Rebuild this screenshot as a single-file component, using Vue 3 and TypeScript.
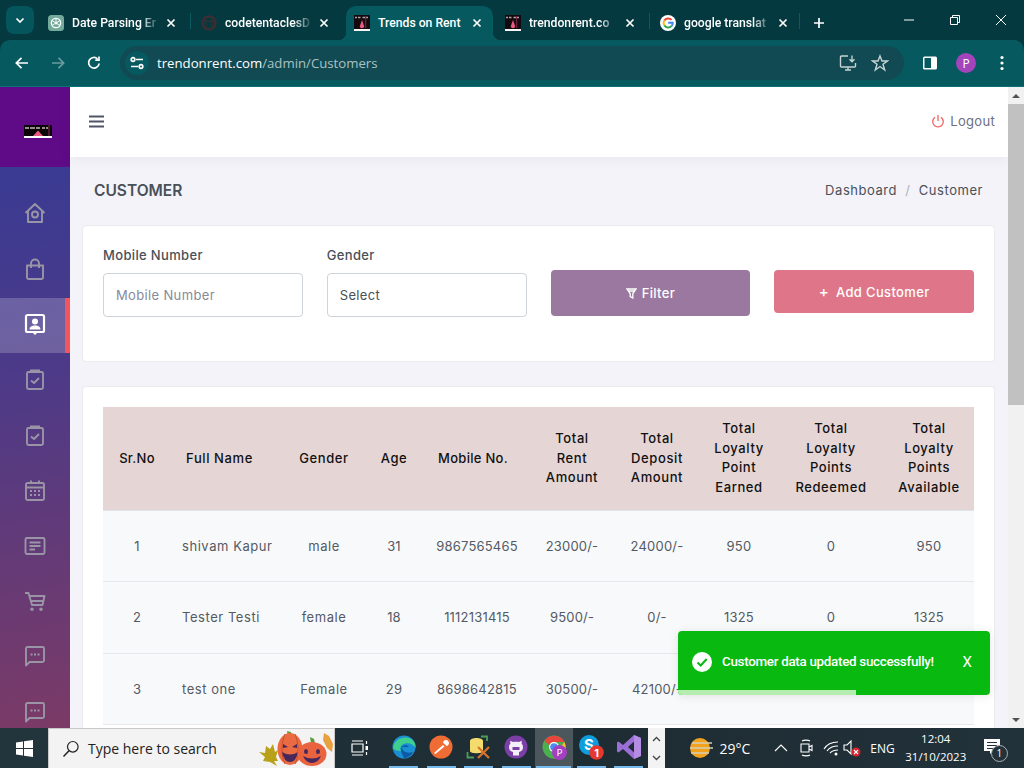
<script setup lang="ts">
interface Tab {
  title: string
  icon: 'gpt' | 'github' | 'rent' | 'google'
  active?: boolean
}

interface NavItem {
  d: string
  solid?: string
  active?: boolean
}

const tabs: Tab[] = [
  { title: 'Date Parsing Er', icon: 'gpt' },
  { title: 'codetentaclesD', icon: 'github' },
  { title: 'Trends on Rent', icon: 'rent', active: true },
  { title: 'trendonrent.co', icon: 'rent' },
  { title: 'google translat', icon: 'google' },
]

const clipboard = 'M7 5H5.5A1.5 1.5 0 0 0 4 6.500V20.500A1.500 1.500 0 0 0 5.500 22H18.500A1.500 1.500 0 0 0 20 20.500V6.500A1.500 1.500 0 0 0 18.500 5H17M8 13.500L11 16L16 11'
const clipTop = 'M7 2.500H17V6H7Z'
const chat = 'M3 4.500A1.500 1.500 0 0 1 4.500 3H19.500A1.500 1.500 0 0 1 21 4.500V16.500A1.500 1.500 0 0 1 19.500 18H6.500L3 21.500Z'
const dots = 'M7.500 9.500h2v2h-2zM11 9.500h2v2h-2zM14.500 9.500h2v2h-2z'

const navItems: NavItem[] = [
  { d: 'M2.500 12L12 3L21.500 12M5 10V21H19V10M15 13.500A3 3 0 1 1 9 13.500A3 3 0 1 1 15 13.500' },
  { d: 'M4 8.500H20V20.500A1.500 1.500 0 0 1 18.500 22H5.500A1.500 1.500 0 0 1 4 20.500ZM8 11V6.500A4 4 0 0 1 16 6.500V11' },
  {
    d: 'M4.500 3H19.500A1.500 1.500 0 0 1 21 4.500V18.500A1.500 1.500 0 0 1 19.500 20H4.500A1.500 1.500 0 0 1 3 18.500V4.500A1.500 1.500 0 0 1 4.500 3Z',
    solid: 'M12 6.500A3 3 0 1 1 12 12.500A3 3 0 1 1 12 6.500ZM6.500 17.500C6.500 14.500 9 13.500 12 13.500C15 13.500 17.500 14.500 17.500 17.500ZM9.500 20.500H14.500L12 23Z',
    active: true,
  },
  { d: clipboard, solid: clipTop },
  { d: clipboard, solid: clipTop },
  {
    d: 'M4.500 5H19.500A1.500 1.500 0 0 1 21 6.500V20.500A1.500 1.500 0 0 1 19.500 22H4.500A1.500 1.500 0 0 1 3 20.500V6.500A1.500 1.500 0 0 1 4.500 5ZM3 9.500H21M8 2.500V6M16 2.500V6',
    solid: 'M7 12h2v2H7zM11 12h2v2h-2zM15 12h2v2h-2zM7 16h2v2H7zM11 16h2v2h-2zM15 16h2v2h-2z',
  },
  { d: 'M4 4H20A1.500 1.500 0 0 1 21.500 5.500V18.500A1.500 1.500 0 0 1 20 20H4A1.500 1.500 0 0 1 2.500 18.500V5.500A1.500 1.500 0 0 1 4 4ZM6.500 8.500H17.500M6.500 12H17.500M6.500 15.500H12' },
  {
    d: 'M2 4H5.500L9 16H19.500L21.500 7H6.500M7.500 12H20',
    solid: 'M9 18.500A1.800 1.800 0 1 1 9 22.100A1.800 1.800 0 1 1 9 18.500ZM18 18.500A1.800 1.800 0 1 1 18 22.100A1.800 1.800 0 1 1 18 18.500Z',
  },
  { d: chat, solid: dots },
  { d: chat, solid: dots },
]

const columns: string[][] = [
  ['Sr.No'],
  ['Full Name'],
  ['Gender'],
  ['Age'],
  ['Mobile No.'],
  ['Total', 'Rent', 'Amount'],
  ['Total', 'Deposit', 'Amount'],
  ['Total', 'Loyalty', 'Point', 'Earned'],
  ['Total', 'Loyalty', 'Points', 'Redeemed'],
  ['Total', 'Loyalty', 'Points', 'Available'],
]

const rows: string[][] = [
  ['1', 'shivam Kapur', 'male', '31', '9867565465', '23000/-', '24000/-', '950', '0', '950'],
  ['2', 'Tester Testi', 'female', '18', '1112131415', '9500/-', '0/-', '1325', '0', '1325'],
  ['3', 'test one', 'Female', '29', '8698642815', '30500/-', '42100/-', '', '', ''],
]

const taskApps = ['edge', 'postman', 'db', 'github', 'chrome', 'skype', 'vs']
</script>

<template>
  <div class="screen">
    <header class="browser">
      <div class="tabstrip">
        <button class="tab-search">
          <svg width="12" height="12" viewBox="0 0 12 12"><path d="M2.500 4.500L6 8L9.500 4.500" class="glyph" /></svg>
        </button>
        <div
          v-for="(tab, i) in tabs"
          :key="i"
          class="tab"
          :class="[`tab-${i}`, { 'tab-active': tab.active }]"
        >
          <svg v-if="tab.icon === 'gpt'" class="favicon" viewBox="0 0 16 16">
            <rect width="16" height="16" rx="3.500" fill="#74aa9c" />
            <circle cx="8" cy="8" r="4.700" fill="none" stroke="#fff" stroke-width="1.200" />
            <path d="M8 3.300V9.500M4 5.700L9.300 8.800M4 10.300L9.300 7.200M12 5.700L8 8M12 10.300L8 8" fill="none" stroke="#fff" stroke-width=".9" />
          </svg>
          <svg v-else-if="tab.icon === 'github'" class="favicon" viewBox="0 0 16 16">
            <circle cx="8" cy="8" r="6.500" fill="none" stroke="#3b2f33" stroke-width="2.400" />
            <path d="M5 13.500V9L3.800 5.500L6.500 6.300H9.500L12.200 5.500L11 9V13.500" fill="none" stroke="#3b2f33" stroke-width="1.200" />
          </svg>
          <svg v-else-if="tab.icon === 'rent'" class="favicon" viewBox="0 0 16 16">
            <rect width="16" height="16" fill="#14090f" />
            <path d="M1 2.500H3M4 2.500H6.500M8.500 2.500H11M12 2.500H14" stroke="#b0a2a5" stroke-width="1.600" />
            <path d="M11.700 1V13" stroke="#7e2b4b" stroke-width="1" />
            <path d="M8 5L10.300 11.500A2.400 2.400 0 0 1 5.700 11.500Z" fill="#ec5a83" />
            <rect y="14" width="16" height="2" fill="#f7f4f4" />
          </svg>
          <svg v-else class="favicon" viewBox="0 0 16 16">
            <circle cx="8" cy="8" r="8" fill="#fff" />
            <path d="M11.600 4.900A4.700 4.700 0 0 0 4.300 5.600" fill="none" stroke="#ea4335" stroke-width="1.900" />
            <path d="M4.300 5.600A4.700 4.700 0 0 0 4.300 10.400" fill="none" stroke="#fbbc05" stroke-width="1.900" />
            <path d="M4.300 10.400A4.700 4.700 0 0 0 11.700 10.900" fill="none" stroke="#34a853" stroke-width="1.900" />
            <path d="M11.700 10.900A4.700 4.700 0 0 0 12.700 7.800H8.200" fill="none" stroke="#4285f4" stroke-width="1.900" />
          </svg>
          <span class="tab-title">{{ tab.title }}</span>
          <svg class="tab-close" width="10" height="10" viewBox="0 0 10 10"><path d="M1.500 1.500L8.500 8.500M8.500 1.500L1.500 8.500" class="glyph" /></svg>
        </div>
        <svg class="tab-new" width="14" height="14" viewBox="0 0 14 14"><path d="M7 2V12M2 7H12" class="glyph" /></svg>
        <div class="window-controls">
          <svg width="12" height="12" viewBox="0 0 12 12"><path d="M1 6H11" class="thin" /></svg>
          <svg width="12" height="12" viewBox="0 0 12 12"><path d="M1.500 3.500H8.500V10.500H1.500ZM3.500 3.500V1.500H10.500V8.500H8.500" class="thin" /></svg>
          <svg width="12" height="12" viewBox="0 0 12 12"><path d="M1 1L11 11M11 1L1 11" class="thin" /></svg>
        </div>
      </div>
      <div class="toolbar">
        <svg width="16" height="16" viewBox="0 0 16 16"><path d="M14 8H2.500M7.500 2.800L2.300 8L7.500 13.200" class="glyph" /></svg>
        <svg class="nav-off" width="16" height="16" viewBox="0 0 16 16"><path d="M2 8H13.500M8.500 2.800L13.700 8L8.500 13.200" class="glyph" /></svg>
        <svg width="16" height="16" viewBox="0 0 16 16"><path d="M13.200 8.500A5.300 5.300 0 1 1 11.500 3.800M13 1.500V5.200H9.300" class="glyph" /></svg>
        <div class="omnibox">
          <span class="site-info">
            <svg width="14" height="14" viewBox="0 0 14 14">
              <path d="M6 3.500H13M1 10.500H8" class="glyph" />
              <circle cx="3" cy="3.500" r="1.800" class="glyph" />
              <circle cx="11" cy="10.500" r="1.800" class="glyph" />
            </svg>
          </span>
          <span class="url">trendonrent.com<span class="url-dim">/admin/Customers</span></span>
          <svg class="omni-icon" width="18" height="18" viewBox="0 0 18 18">
            <path d="M9 2H2.500A1 1 0 0 0 1.500 3V12A1 1 0 0 0 2.500 13H15.500A1 1 0 0 0 16.500 12V9M6 16H12M9 13V16M13 1.500V7.500M10.500 5.200L13 7.700L15.500 5.200" class="omni-line" />
          </svg>
          <svg class="omni-icon star" width="18" height="18" viewBox="0 0 18 18">
            <path d="M9 2L11 7H16.500L12 10.300L13.700 16L9 12.500L4.300 16L6 10.300L1.500 7H7Z" class="omni-line" />
          </svg>
        </div>
        <svg class="side-panel" width="16" height="16" viewBox="0 0 16 16">
          <rect x="1" y="1.500" width="14" height="13" rx="1.500" fill="#fff" />
          <rect x="2.500" y="3" width="6.500" height="10" fill="#04595f" />
        </svg>
        <span class="avatar">P</span>
        <svg class="kebab" width="4" height="16" viewBox="0 0 4 16">
          <circle cx="2" cy="2.500" r="1.600" fill="#fff" />
          <circle cx="2" cy="8" r="1.600" fill="#fff" />
          <circle cx="2" cy="13.500" r="1.600" fill="#fff" />
        </svg>
      </div>
    </header>

    <div class="viewport">
      <aside class="sidebar">
        <div class="brand">
          <svg class="brand-logo" width="28" height="13" viewBox="0 0 28 13">
            <rect width="28" height="11" fill="#0b0709" />
            <path d="M1 3H5M6 3H11M12 3H16M18 3H21M22 3H24" stroke="#c6bbbb" stroke-width="1.500" />
            <path d="M14 5.500L19 11H9Z" fill="#ea5a80" />
            <rect x="24.500" y="0" width="1" height="11" fill="#8a2c55" />
            <rect y="11" width="28" height="2" fill="#fff" />
          </svg>
        </div>
        <nav class="nav">
          <div v-for="(item, i) in navItems" :key="i" class="nav-item" :class="{ 'nav-active': item.active }">
            <svg width="24" height="24" viewBox="0 0 24 24">
              <path :d="item.d" class="nav-line" />
              <path v-if="item.solid" :d="item.solid" class="nav-solid" />
            </svg>
          </div>
        </nav>
      </aside>

      <main class="page">
        <div class="topbar">
          <svg width="16" height="13" viewBox="0 0 16 13"><path d="M0 1.500H15M0 6.500H15M0 11.500H15" class="burger" /></svg>
          <span class="logout">
            <svg width="14" height="14" viewBox="0 0 14 14"><path d="M4 3.200A5.300 5.300 0 1 0 10 3.200M7 1V7" class="power" /></svg>
            Logout
          </span>
        </div>

        <div class="title-row">
          <h1>CUSTOMER</h1>
          <div class="crumbs">Dashboard <span class="crumb-sep">/</span> Customer</div>
        </div>

        <section class="card filters">
          <div class="field">
            <label>Mobile Number</label>
            <input type="text" placeholder="Mobile Number" />
          </div>
          <div class="field">
            <label>Gender</label>
            <div class="select">Select</div>
          </div>
          <button class="btn btn-filter">
            <svg width="11" height="11" viewBox="0 0 11 11"><path d="M1 1H10L6.800 5.500V10L4.200 8.500V5.500ZM3 3H8" class="btn-icon" /></svg>
            Filter
          </button>
          <button class="btn btn-add"><span class="plus">+</span> Add Customer</button>
        </section>

        <section class="card table-card">
          <table>
            <thead>
              <tr>
                <th v-for="(col, i) in columns" :key="i">
                  <div v-for="line in col" :key="line">{{ line }}</div>
                </th>
              </tr>
            </thead>
            <tbody>
              <tr v-for="row in rows" :key="row[0]">
                <td v-for="(cell, i) in row" :key="i">{{ cell }}</td>
              </tr>
            </tbody>
          </table>
        </section>
      </main>

      <div class="scrollbar">
        <span class="arrow arrow-up"></span>
        <div class="track"><div class="thumb"></div></div>
        <span class="arrow arrow-down"></span>
      </div>

      <div class="toast">
        <svg width="20" height="20" viewBox="0 0 20 20">
          <circle cx="10" cy="10" r="10" fill="#fff" />
          <path d="M5.500 10.500L8.700 13.500L14.700 7" fill="none" stroke="#08b90f" stroke-width="2" />
        </svg>
        <span class="toast-text">Customer data updated successfully!</span>
        <span class="toast-close">X</span>
        <div class="toast-progress"></div>
      </div>
    </div>

    <footer class="taskbar">
      <div class="start">
        <svg width="17" height="17" viewBox="0 0 17 17">
          <path d="M0 2.400L7 1.400V8H0ZM8 1.300L17 0V8H8ZM0 9H7V15.600L0 14.600ZM8 9H17V17L8 15.700Z" fill="#fff" />
        </svg>
      </div>
      <div class="search">
        <svg width="18" height="18" viewBox="0 0 18 18">
          <circle cx="10.800" cy="6.800" r="5.300" fill="none" stroke="#222" stroke-width="1.200" />
          <path d="M7 10.800L1.500 16.500" stroke="#222" stroke-width="1.500" />
        </svg>
        <span class="search-text">Type here to search</span>
        <svg class="pumpkins" width="76" height="38" viewBox="0 0 76 38">
          <path d="M1 22L7 23L8 16L12 19L15 14L17 22L20 20L18 27L20 31L16 31L19 36L12 32L5 31L7 27Z" fill="#b9a019" />
          <path d="M30 7L29 1L33 2L34 7Z" fill="#5d9a3e" />
          <ellipse cx="32" cy="19" rx="12.500" ry="16" fill="#ea6a42" />
          <path d="M27 4C23 14 23 26 27 34M37 4C41 14 41 26 37 34" fill="none" stroke="#c9502f" stroke-width="1" />
          <path d="M25 14L30 17L25 18ZM39 14L34 17L39 18Z" fill="#46285c" />
          <path d="M24 22Q32 27 40 22Q38 32 32 32Q26 32 24 22Z" fill="#46285c" />
          <path d="M53 13L52 7L56 9L57 13Z" fill="#5d9a3e" />
          <ellipse cx="54" cy="24" rx="14.500" ry="12" fill="#e9633f" />
          <path d="M48 19A2 2.500 0 1 1 48 24A2 2.500 0 1 1 48 19ZM60 19A2 2.500 0 1 1 60 24A2 2.500 0 1 1 60 19Z" fill="#46285c" />
          <path d="M45 26Q54 31 63 26Q60 33 54 33Q48 33 45 26Z" fill="#46285c" />
          <path d="M66 3L71 6L75 14L74 22L69 18L65 10Z" fill="#e9a03f" />
        </svg>
      </div>
      <div class="task-view">
        <svg width="18" height="16" viewBox="0 0 18 16">
          <path d="M1 4H12V12H1ZM1 1H12M1 15H12M15.500 1V4M15.500 12V15" fill="none" stroke="#fff" stroke-width="1.200" />
          <rect x="14.500" y="6" width="2.500" height="4" fill="#fff" />
        </svg>
      </div>
      <div v-for="app in taskApps" :key="app" class="task-app" :class="{ 'app-current': app === 'chrome' }">
        <svg width="26" height="26" viewBox="0 0 26 26">
          <template v-if="app === 'edge'">
            <circle cx="13" cy="13" r="11.500" fill="#1b8fd3" />
            <path d="M2 14C3 6 11 2 18 4C23 6 25 10 24.500 14C22 9 15 8 11 11C9 13 9 15 10 17C6 17 3 16 2 14Z" fill="#3ecf8e" />
            <path d="M10 15C10 11 16 10 18 13H11C11 17 15 20 22 18C20 22 16 24 13 24C11 20 10 18 10 15Z" fill="#0c59a4" />
          </template>
          <template v-else-if="app === 'postman'">
            <circle cx="13" cy="13" r="11.500" fill="#ef6c35" />
            <path d="M6 19L15 11L16.500 12.500L7.500 20ZM15 8.500A3 3 0 1 1 18.500 12Z" fill="#fff" />
          </template>
          <template v-else-if="app === 'db'">
            <path d="M4 7C4 3 17 3 17 7V17C17 20 4 20 4 17Z" fill="#f3dc6d" />
            <path d="M15 2.500H21V7M1.500 18V23.500H8" fill="none" stroke="#4f9c5a" stroke-width="1.800" />
            <path d="M12 13L23 24M23 13L12 24" stroke="#d9742c" stroke-width="2.200" />
          </template>
          <template v-else-if="app === 'github'">
            <circle cx="13" cy="13" r="11.500" fill="#7b3fa6" />
            <path d="M10 21.500V18C7 17.500 6 15.500 6 13C6 11.500 6.500 10.500 7.300 9.700L7.300 6.800L10 8C12 7.500 14 7.500 16 8L18.700 6.800L18.700 9.700C19.500 10.500 20 11.500 20 13C20 15.500 19 17.500 16 18V21.500" fill="#f3eef7" />
            <path d="M9.500 13H16.500V16H9.500Z" fill="#7b3fa6" />
          </template>
          <template v-else-if="app === 'chrome'">
            <circle cx="13" cy="13" r="11.500" fill="#4caf50" />
            <path d="M3.500 7A11.500 11.500 0 0 1 23.500 8H13A5 5 0 0 0 8 11Z" fill="#e8453c" />
            <path d="M23.500 8A11.500 11.500 0 0 1 13 24.500L17 16Z" fill="#fbc02d" />
            <circle cx="13" cy="13" r="5" fill="#fff" />
            <circle cx="13" cy="13" r="3.800" fill="#4a8af4" />
            <circle cx="18.500" cy="18.500" r="7.500" fill="#a33fc0" />
            <text x="18.500" y="21.500" text-anchor="middle" class="badge-p">P</text>
          </template>
          <template v-else-if="app === 'skype'">
            <circle cx="11" cy="11" r="10" fill="#0e9ee0" />
            <text x="11" y="16" text-anchor="middle" class="skype-s">S</text>
            <circle cx="18.500" cy="18.500" r="7.300" fill="#e5392f" />
            <text x="18.500" y="22.500" text-anchor="middle" class="badge-one">1</text>
          </template>
          <template v-else>
            <path d="M18 1L25 4V22L18 25L7 15L2.500 18.500L1 17.500V8.500L2.500 7.500L7 11ZM18 7.500L12 13L18 18.500Z" fill="#9b6fd6" />
            <path d="M18 1L25 4V22L18 25Z" fill="#b48ce6" />
          </template>
        </svg>
      </div>
      <div class="overflow-arrows">
        <svg width="9" height="6" viewBox="0 0 9 6"><path d="M1 5L4.500 1.500L8 5" class="chev" /></svg>
        <svg width="9" height="6" viewBox="0 0 9 6"><path d="M1 1L4.500 4.500L8 1" class="chev" /></svg>
      </div>
      <div class="tray">
        <svg class="weather" width="24" height="22" viewBox="0 0 24 22">
          <circle cx="11" cy="11" r="10" fill="#f2a21c" />
          <path d="M3 6H23M1 11H24M2 16H20" stroke="#d8d0b8" stroke-width="1.300" />
        </svg>
        <span class="temp">29°C</span>
        <svg class="tray-chev" width="14" height="8" viewBox="0 0 14 8"><path d="M1 7L7 1L13 7" class="tray-line" /></svg>
        <svg class="tray-meet" width="14" height="20" viewBox="0 0 14 20">
          <path d="M2 6H10V14H2ZM10 9L13 7.500V12.500L10 11M3 3C5 1.800 9 1.800 11 3M3 17C5 18.200 9 18.200 11 17" class="tray-line" />
        </svg>
        <svg class="tray-wifi" width="16" height="16" viewBox="0 0 16 16">
          <path d="M1 9C4 4 9 2 15 2M4 11C6 8 10 6 15 6M7 13C9 11 11 10 15 10" class="tray-line" />
          <circle cx="13" cy="14" r="1.500" fill="#fff" />
        </svg>
        <svg class="tray-sound" width="18" height="18" viewBox="0 0 18 18">
          <path d="M1 6H4L8 2V15L4 11H1Z" class="tray-line" />
          <circle cx="13" cy="13" r="4.500" fill="#d3232f" />
          <path d="M11 11L15 15M15 11L11 15" stroke="#fff" stroke-width="1.100" />
        </svg>
        <span class="lang">ENG</span>
        <div class="clock"><div>12:04</div><div>31/10/2023</div></div>
        <div class="notify">
          <svg width="16" height="15" viewBox="0 0 16 15">
            <path d="M0 0H16V12H9L6 15V12H0Z" fill="#fff" />
            <path d="M3 3.500H13M3 6.500H13M3 9.500H10" stroke="#24333a" stroke-width="1" />
          </svg>
          <span class="notify-count">1</span>
        </div>
      </div>
    </footer>
  </div>
</template>

<style>
html,
body {
  margin: 0;
  overflow: hidden;
}
</style>

<style scoped>
.screen {
  width: 1024px;
  height: 768px;
  display: flex;
  flex-direction: column;
  overflow: hidden;
  font-family: Inter, 'Noto Sans', sans-serif;
}
.glyph {
  fill: none;
  stroke: #fff;
  stroke-width: 1.700;
}
.thin {
  fill: none;
  stroke: #fff;
  stroke-width: 1;
}

/* browser */
.browser {
  height: 87px;
  background: #03393f;
  flex: none;
  font-family: 'Open Sans', 'Noto Sans', sans-serif;
  color: #fff;
}
.tabstrip {
  height: 40px;
  display: flex;
  align-items: flex-end;
  padding-left: 6px;
}
.tab-search {
  width: 28px;
  height: 28px;
  margin: 0 4px 6px 0;
  border: none;
  border-radius: 8px;
  background: #05555c;
  display: flex;
  align-items: center;
  justify-content: center;
  padding: 0;
}
.tab {
  position: relative;
  height: 34px;
  box-sizing: border-box;
  display: flex;
  align-items: center;
  padding: 0 15px 0 10px;
  font-family: Roboto, sans-serif;
  font-size: 12.200px;
  font-weight: 500;
}
.tab-0 { width: 153px; }
.tab-1 { width: 153px; }
.tab-2 {
  width: 147px;
  margin: 0 2px;
  padding: 0 11px 0 8px;
}
.tab-3 { width: 155px; }
.tab-4 {
  width: 150px;
  padding-right: 12px;
}
.tab-0::after,
.tab-3::after,
.tab-4::after {
  content: '';
  position: absolute;
  right: 0;
  top: 7px;
  width: 1px;
  height: 16px;
  background: #0a5a62;
}
.tab-active {
  background: #05595f;
  border-radius: 10px 10px 0 0;
}
.tab-active::before,
.tab-active::after {
  content: '';
  position: absolute;
  bottom: 0;
  width: 8px;
  height: 8px;
}
.tab-active::before {
  left: -8px;
  background: radial-gradient(circle at 0 0, transparent 8px, #05595f 8.500px);
}
.tab-active::after {
  right: -8px;
  background: radial-gradient(circle at 100% 0, transparent 8px, #05595f 8.500px);
}
.favicon {
  width: 16px;
  height: 16px;
  flex: none;
  margin-right: 8px;
}
.tab-title {
  flex: 1;
  overflow: hidden;
  white-space: nowrap;
  -webkit-mask-image: linear-gradient(90deg, #000 78%, transparent 100%);
  mask-image: linear-gradient(90deg, #000 78%, transparent 100%);
}
.tab-active .tab-title {
  -webkit-mask-image: none;
  mask-image: none;
}
.tab-close {
  flex: none;
  margin-left: 6px;
}
.tab-new {
  margin: 0 0 10px 12px;
}
.window-controls {
  margin-left: auto;
  height: 40px;
  display: flex;
  align-items: center;
  gap: 34px;
  padding: 0 17px 0 0;
}
.window-controls svg {
  width: 12px;
  height: 12px;
}
.toolbar {
  height: 47px;
  box-sizing: border-box;
  background: #05595f;
  border-radius: 10px 10px 0 0;
  display: flex;
  align-items: center;
  padding: 0 0 0 14px;
  border-bottom: 1px solid #0b7278;
}
.nav-off {
  margin-left: 20px;
  opacity: 0.4;
}
.nav-off + svg {
  margin-left: 20px;
}
.omnibox {
  width: 784px;
  height: 34px;
  margin-left: 18px;
  border-radius: 17px;
  background: #114a52;
  display: flex;
  align-items: center;
  padding-left: 5px;
  box-sizing: border-box;
}
.site-info {
  width: 24px;
  height: 24px;
  border-radius: 50%;
  background: #05595f;
  display: flex;
  align-items: center;
  justify-content: center;
}
.url {
  margin-left: 8px;
  font-size: 13.200px;
  flex: 1;
}
.url-dim {
  color: #a9c2c4;
}
.omni-icon {
  flex: none;
}
.omni-line {
  fill: none;
  stroke: #c7d4d5;
  stroke-width: 1.400;
}
.star {
  margin: 0 15px 0 14px;
}
.side-panel {
  margin-left: 18px;
}
.avatar {
  width: 20px;
  height: 20px;
  margin-left: 18px;
  border-radius: 50%;
  background: #a344bd;
  font-size: 12px;
  display: flex;
  align-items: center;
  justify-content: center;
}
.kebab {
  margin-left: 24px;
}

/* page */
.viewport {
  flex: 1;
  min-height: 0;
  display: flex;
  position: relative;
  overflow: hidden;
}
.sidebar {
  width: 70px;
  flex: none;
  display: flex;
  flex-direction: column;
  background: linear-gradient(170deg, #323b97 0%, #4d3a88 45%, #7b3a66 100%);
}
.brand {
  height: 80px;
  flex: none;
  background: #5f0a87;
  display: flex;
  align-items: center;
  justify-content: center;
}
.brand-logo {
  margin: 9px 0 0 6px;
}
.nav {
  padding-top: 20px;
}
.nav-item {
  height: 55.400px;
  box-sizing: border-box;
  padding: 0 1px 3px 0;
  display: flex;
  align-items: center;
  justify-content: center;
}
.nav-line {
  fill: none;
  stroke: #9a95a6;
  stroke-width: 1.900;
  stroke-linejoin: round;
}
.nav-solid {
  fill: #9a95a6;
}
.nav-active {
  background: rgba(255, 255, 255, 0.2);
  border-right: 5px solid #f5545a;
  padding-left: 5px;
}
.nav-active .nav-line {
  stroke: #fff;
  stroke-width: 2.200;
}
.nav-active .nav-solid {
  fill: #fff;
}
.page {
  flex: 1;
  min-width: 0;
  background: #f3f3f9;
  padding: 0 13px 0 12px;
}
.topbar {
  height: 70px;
  box-sizing: border-box;
  margin: 0 -13px 0 -12px;
  padding: 0 13px 2px 19px;
  background: #fff;
  box-shadow: 0 1px 12px rgba(56, 65, 74, 0.07);
  display: flex;
  align-items: center;
  justify-content: space-between;
}
.burger {
  fill: none;
  stroke: #505468;
  stroke-width: 2.200;
}
.logout {
  display: flex;
  align-items: center;
  gap: 5px;
  font-size: 13px;
  letter-spacing: 0.3px;
  color: #6b6f80;
}
.power {
  fill: none;
  stroke: #f0625f;
  stroke-width: 1.300;
}
.title-row {
  height: 68px;
  box-sizing: border-box;
  padding: 0 12px 2px;
  display: flex;
  align-items: center;
  justify-content: space-between;
}
.title-row h1 {
  margin: 0;
  font-size: 15.500px;
  font-weight: 600;
  color: #495057;
}
.crumbs {
  font-size: 13px;
  letter-spacing: 0.55px;
  color: #495057;
}
.crumb-sep {
  margin: 0 4px;
  color: #adb5bd;
}
.card {
  background: #fff;
  border: 1px solid #e9ebec;
  border-radius: 4px;
  box-sizing: border-box;
}
.filters {
  height: 137px;
  padding: 20px;
  display: grid;
  grid-template-columns: repeat(4, 1fr);
  column-gap: 24px;
  align-items: start;
}
.field {
  display: flex;
  flex-direction: column;
}
.field label {
  height: 27px;
  font-size: 13px;
  line-height: 19px;
  letter-spacing: 0.35px;
  font-weight: 500;
  color: #495057;
}
.field input,
.select {
  width: 100%;
  height: 44px;
  box-sizing: border-box;
  padding: 0 12px 1px;
  border: 1px solid #ced4da;
  border-radius: 4px;
  background: #fff;
  font: 13px Inter, sans-serif;
  letter-spacing: 0.35px;
  display: flex;
  align-items: center;
  color: #495057;
}
.field input::placeholder {
  color: #878a99;
}
.btn {
  margin-top: 24px;
  border: none;
  border-radius: 4px;
  color: #fff;
  font: 13px Inter, sans-serif;
  font-weight: 500;
  letter-spacing: 0.35px;
  display: flex;
  align-items: center;
  justify-content: center;
  gap: 5px;
  padding: 0;
}
.btn-filter {
  height: 46px;
  background: #9b789f;
}
.btn-add {
  height: 43px;
  background: #de7588;
}
.plus {
  font-size: 15px;
  margin-right: 2px;
}
.btn-icon {
  fill: none;
  stroke: #fff;
  stroke-width: 1.300;
}
.table-card {
  margin-top: 24px;
  padding: 20px;
}
table {
  width: 871px;
  table-layout: fixed;
  border-collapse: collapse;
  background: #f8f9fb;
}
th {
  height: 103px;
  box-sizing: border-box;
  padding: 0;
  background: #e5d6d5;
  font-size: 13px;
  line-height: 19.500px;
  font-weight: 500;
  color: #111;
  letter-spacing: 0.6px;
  border-bottom: 1px solid #dfe4e8;
}
th:nth-child(1),
th:nth-child(5) {
  letter-spacing: 0.3px;
}
td {
  height: 71.500px;
  box-sizing: border-box;
  padding: 0;
  text-align: center;
  font-size: 13px;
  color: #545a63;
  letter-spacing: 0.2px;
  border-bottom: 1px solid #e6e8eb;
}
td:nth-child(2),
td:nth-child(3) {
  letter-spacing: 0.55px;
}
td:nth-child(2) {
  text-align: left;
  padding-left: 11px;
}
th:nth-child(1), td:nth-child(1) { width: 68px; }
th:nth-child(2), td:nth-child(2) { width: 113px; }
th:nth-child(3), td:nth-child(3) { width: 80px; }
th:nth-child(4), td:nth-child(4) { width: 60px; }
th:nth-child(5), td:nth-child(5) { width: 106px; }
th:nth-child(6), td:nth-child(6) { width: 84px; }
th:nth-child(7), td:nth-child(7) { width: 86px; }
th:nth-child(8), td:nth-child(8) { width: 78px; }
th:nth-child(9), td:nth-child(9) { width: 106px; }
th:nth-child(10), td:nth-child(10) { width: 90px; }
th:nth-child(2) {
  padding-right: 16px;
}
th:nth-child(5) {
  padding-right: 8px;
}
.scrollbar {
  width: 16px;
  flex: none;
  display: flex;
  flex-direction: column;
  align-items: center;
  background: #f1f1f1;
}
.arrow {
  height: 17px;
  flex: none;
  display: flex;
  align-items: center;
}
.arrow::before {
  content: '';
  border-left: 4px solid transparent;
  border-right: 4px solid transparent;
}
.arrow-up::before {
  border-bottom: 4px solid #505050;
}
.arrow-down::before {
  border-top: 4px solid #505050;
}
.track {
  flex: 1;
  width: 100%;
}
.thumb {
  height: 301px;
  background: #c1c1c1;
}
.toast {
  position: absolute;
  left: 678px;
  top: 544px;
  width: 312px;
  height: 64px;
  box-sizing: border-box;
  padding: 0 18px 3px 14px;
  border-radius: 4px;
  overflow: hidden;
  background: #08b90f;
  box-shadow: 0 1px 10px rgba(0, 0, 0, 0.1);
  display: flex;
  align-items: center;
  font-family: Roboto, sans-serif;
  font-size: 13.400px;
  letter-spacing: -0.3px;
  font-weight: 500;
  color: #fff;
}
.toast-text {
  margin-left: 10px;
  flex: 1;
}
.toast-close {
  font-size: 15px;
  font-weight: 400;
  letter-spacing: 0;
}
.toast-progress {
  position: absolute;
  left: 0;
  bottom: 0;
  width: 178px;
  height: 5px;
  background: #b5ecb0;
}

/* windows taskbar */
.taskbar {
  height: 40px;
  flex: none;
  display: flex;
  align-items: center;
  background: linear-gradient(90deg, #22343c, #1e2c33 60%, #22323a);
  font-family: 'Open Sans', 'Noto Sans', sans-serif;
  color: #fff;
}
.start {
  width: 48px;
  display: flex;
  justify-content: center;
}
.search {
  width: 287px;
  height: 40px;
  box-sizing: border-box;
  background: #f3f3f3;
  border: 1px solid #c9c9c9;
  border-bottom: none;
  display: flex;
  align-items: center;
  padding-left: 13px;
  color: #222;
  font-size: 14px;
}
.search-text {
  margin-left: 8px;
}
.pumpkins {
  margin-left: auto;
}
.task-view {
  width: 50px;
  display: flex;
  justify-content: center;
}
.task-app {
  width: 37.500px;
  height: 40px;
  flex: none;
  box-sizing: border-box;
  display: flex;
  align-items: center;
  justify-content: center;
  padding: 0 0 2px;
  background: linear-gradient(#76b9ed, #76b9ed) center bottom / 29px 2px no-repeat;
}
.app-current {
  background: linear-gradient(#76b9ed, #76b9ed) center bottom / 35px 2px no-repeat,
    rgba(255, 255, 255, 0.2);
}
.badge-p {
  font: 9px Inter, sans-serif;
  fill: #fff;
}
.skype-s {
  font: 700 15px Inter, sans-serif;
  fill: #fff;
}
.badge-one {
  font: 700 11px Inter, sans-serif;
  fill: #fff;
}
.overflow-arrows {
  width: 17px;
  height: 40px;
  flex: none;
  background: #f3f3f3;
  display: flex;
  flex-direction: column;
  align-items: center;
  justify-content: center;
  gap: 13px;
}
.chev {
  fill: none;
  stroke: #444;
  stroke-width: 1.300;
}
.tray {
  flex: 1;
  display: flex;
  align-items: center;
  font-size: 13px;
}
.weather {
  margin-left: 24px;
}
.temp {
  margin-left: 7px;
  font-size: 14px;
}
.tray-line {
  fill: none;
  stroke: #fff;
  stroke-width: 1.100;
}
.tray-chev {
  margin-left: 24px;
}
.tray-meet {
  margin-left: 11px;
}
.tray-wifi {
  margin-left: 10px;
}
.tray-sound {
  margin-left: 4px;
}
.lang {
  margin-left: 9px;
  font-size: 12px;
}
.clock {
  margin-left: 8px;
  width: 66px;
  text-align: center;
  font-size: 11.500px;
  line-height: 18px;
}
.notify {
  position: relative;
  margin-left: 15px;
  display: flex;
  margin-top: -4px;
}
.notify-count {
  position: absolute;
  left: 7px;
  top: 6px;
  width: 15px;
  height: 15px;
  border-radius: 50%;
  border: 1px solid #aab0b3;
  background: #24333a;
  font-size: 10px;
  line-height: 15px;
  text-align: center;
}
</style>
